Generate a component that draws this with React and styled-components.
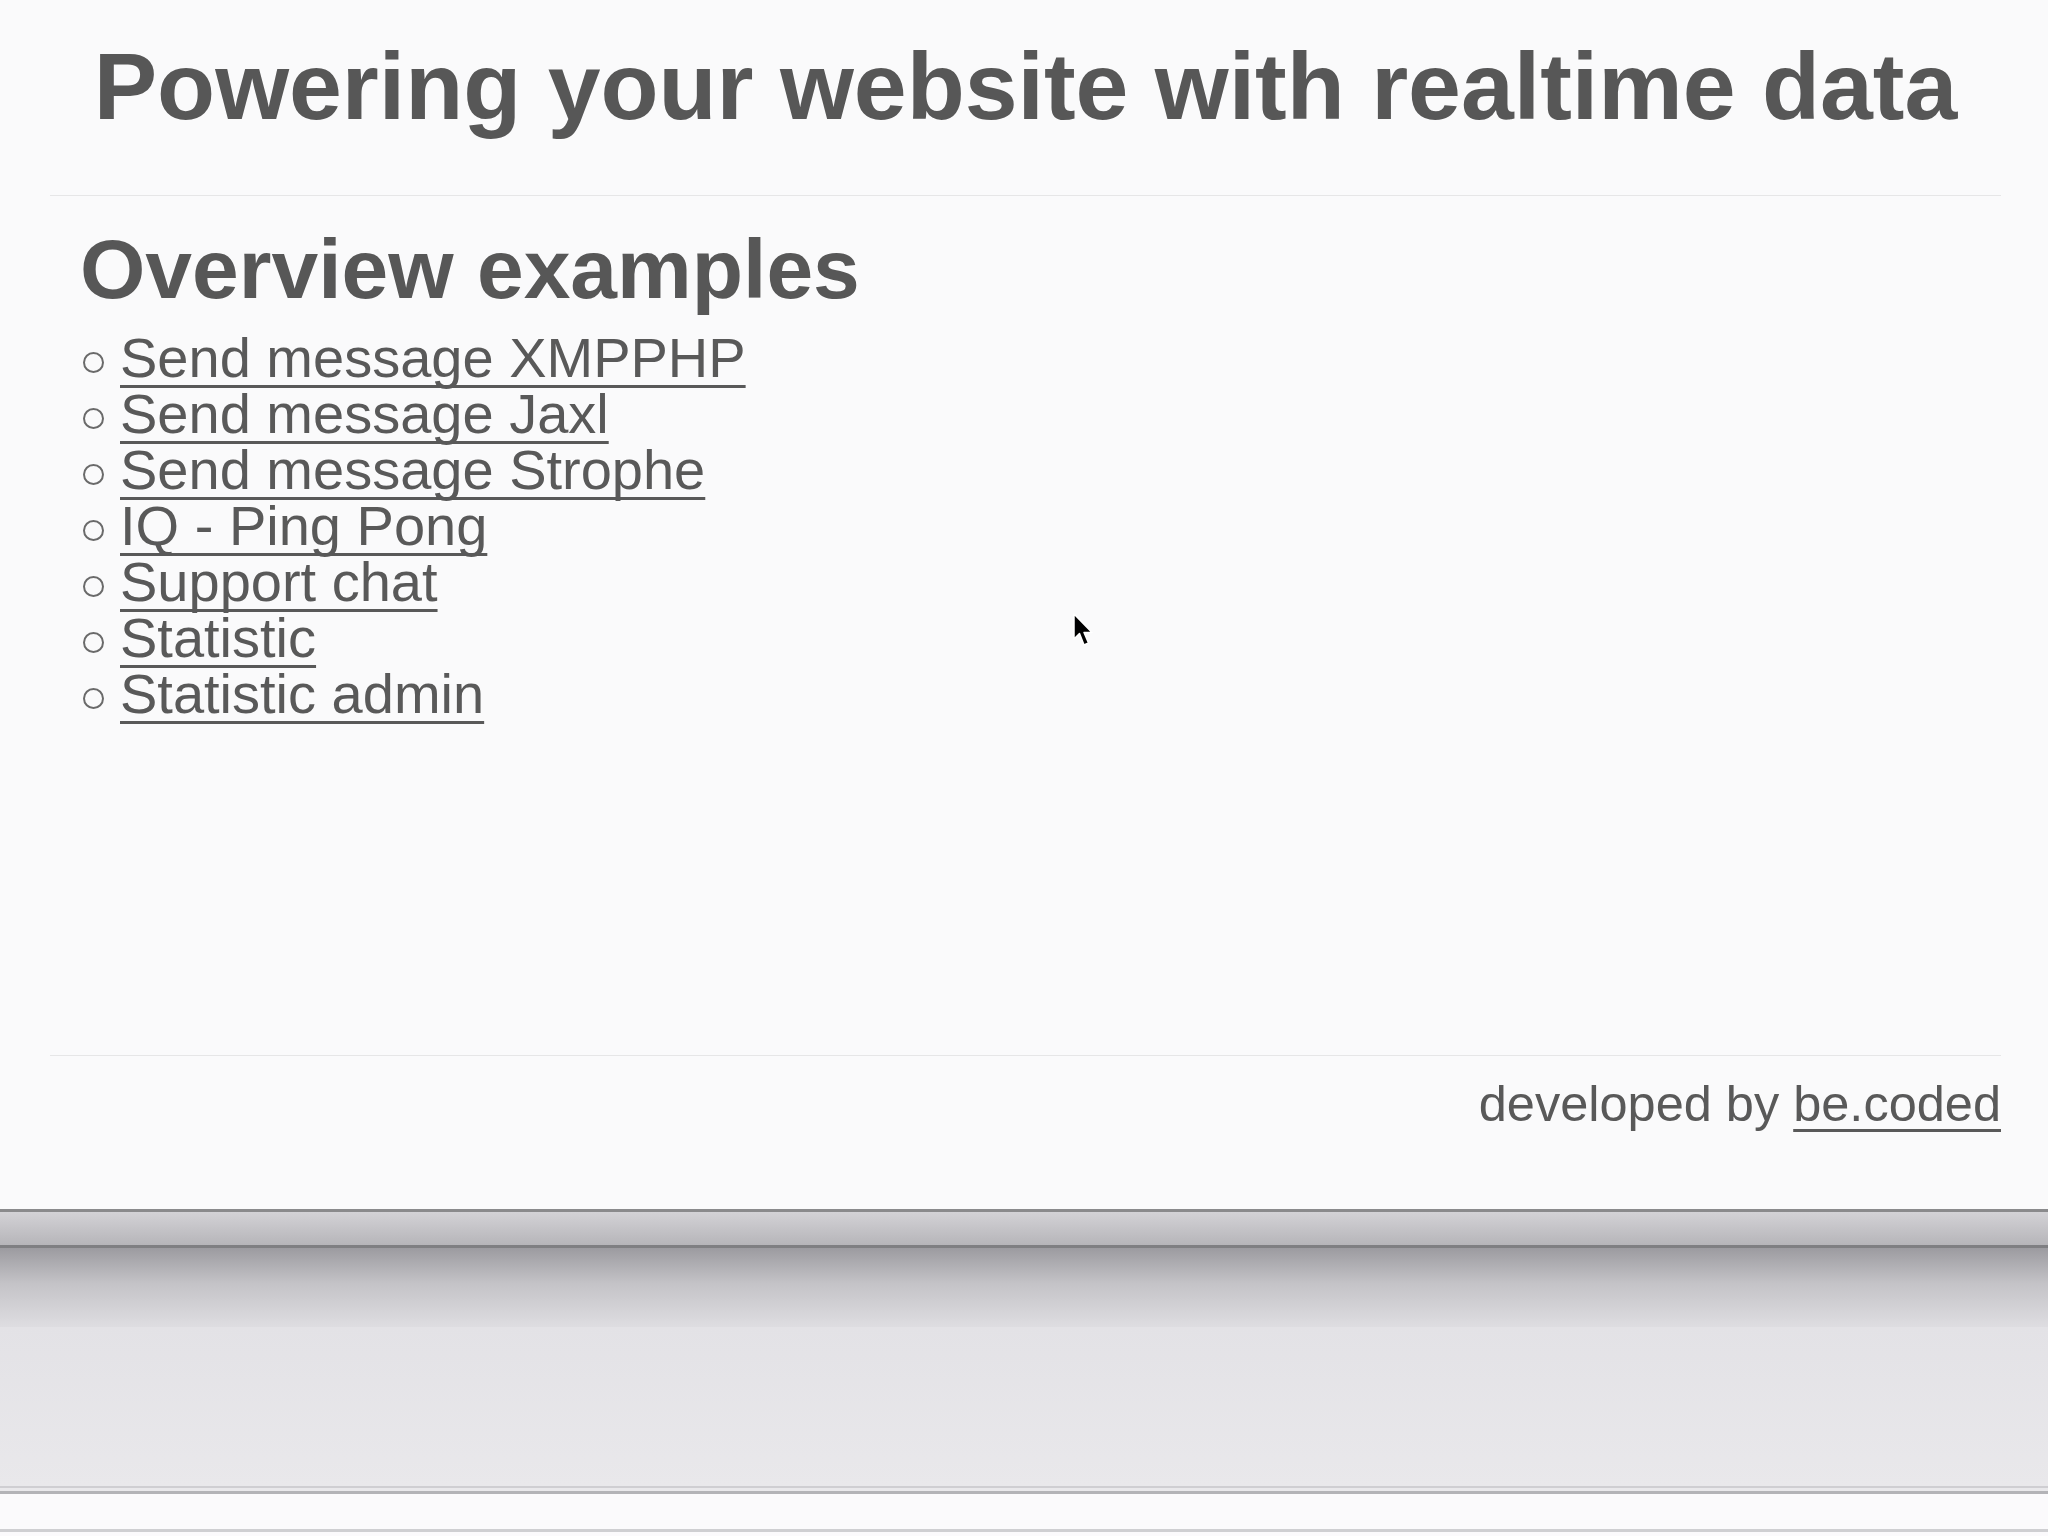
import styled, { createGlobalStyle } from 'styled-components';

const GlobalStyle = createGlobalStyle`
    html, body {
        margin: 0;
        padding: 0;
        overflow: hidden;
    }
    body {
        font-family: "Liberation Sans", Arial, Helvetica, sans-serif;
        background: #fafafb;
        color: #595959;
    }
`;

const Screen = styled.div`
    position: relative;
    width: 2048px;
    height: 1536px;
    display: flex;
    flex-direction: column;
`;

const Page = styled.div`
    height: 1209px;
    display: flex;
    flex-direction: column;
    margin: 0 47px 0 50px;
    flex-shrink: 0;
`;

const Header = styled.header`
    height: 196px;
    box-sizing: border-box;
    padding-top: 32px;
    border-bottom: 1px solid #e6e6e7;
    text-align: center;
`;

const Title = styled.h1`
    margin: 0;
    font-size: 95px;
    line-height: 1.15;
    font-weight: bold;
    color: #575757;
`;

const Main = styled.main`
    flex: 1;
    padding: 25px 0 0 30px;
`;

const Heading = styled.h2`
    margin: 0;
    font-size: 84px;
    line-height: 1.15;
    font-weight: bold;
    color: #575757;
`;

const List = styled.ul`
    list-style: none;
    margin: 12px 0 0 0;
    padding: 0;
`;

const Item = styled.li`
    display: flex;
    align-items: flex-start;
    font-size: 56px;
    line-height: 56px;
    height: 56px;

    &::before {
        content: '';
        flex-shrink: 0;
        width: 17px;
        height: 17px;
        margin: 22px 16px 0 3px;
        border: 2px solid #6a6a6a;
        border-radius: 50%;
    }
`;

const Link = styled.a`
    color: #595959;
    text-decoration: underline;
    text-decoration-thickness: 3px;
    text-underline-offset: 8px;
    text-decoration-skip-ink: none;
    cursor: pointer;
`;

const Footer = styled.footer`
    height: 154px;
    box-sizing: border-box;
    border-top: 1px solid #e6e6e7;
    padding-top: 19px;
    text-align: right;
    font-size: 50.5px;
    line-height: 1.15;
    color: #595959;
`;

const Chrome = styled.div`
    flex: 1;
    display: flex;
    flex-direction: column;
`;

const Band = styled.div`
    height: ${p => p.$h}px;
    flex-shrink: 0;
    background: ${p => p.$bg};
`;

const Cursor = styled.svg`
    position: absolute;
    left: 1072px;
    top: 612px;
    width: 24px;
    height: 40px;
`;

const links = [
    'Send message XMPPHP',
    'Send message Jaxl',
    'Send message Strophe',
    'IQ - Ping Pong',
    'Support chat',
    'Statistic',
    'Statistic admin',
];

const bands = [
    [3, '#8a8a8c'],
    [33, 'linear-gradient(#d3d2d6, #b6b5b9)'],
    [3, '#7f7f82'],
    [79, 'linear-gradient(#9c9ba0, #c4c3c7 45%, #dedde1)'],
    [159, 'linear-gradient(#e3e2e6, #e9e8eb)'],
    [2, '#cfced2'],
    [3, '#e9e8eb'],
    [3, '#b3b3b7'],
    [35, '#fbfafc'],
    [3, '#cfcfd2'],
    [4, '#fbfafc'],
];

const App = () => {
    return (
        <>
            <GlobalStyle />
            <Screen>
                <Page>
                    <Header>
                        <Title>Powering your website with realtime data</Title>
                    </Header>
                    <Main>
                        <Heading>Overview examples</Heading>
                        <List>
                            {links.map(l => (
                                <Item key={l}><Link>{l}</Link></Item>
                            ))}
                        </List>
                    </Main>
                    <Footer>
                        developed by <Link>be.coded</Link>
                    </Footer>
                </Page>
                <Chrome>
                    {bands.map(([h, bg], i) => <Band key={i} $h={h} $bg={bg} />)}
                </Chrome>
                <Cursor viewBox="0 0 24 40">
                    <path d="M2 2 L2 27 L7.5 21.5 L12 33 L16.5 31 L12 20.5 L20 20.5 Z" fill="#000" stroke="#fff" strokeWidth="1.5" strokeLinejoin="round" />
                </Cursor>
            </Screen>
        </>
    );
};

export default App;
